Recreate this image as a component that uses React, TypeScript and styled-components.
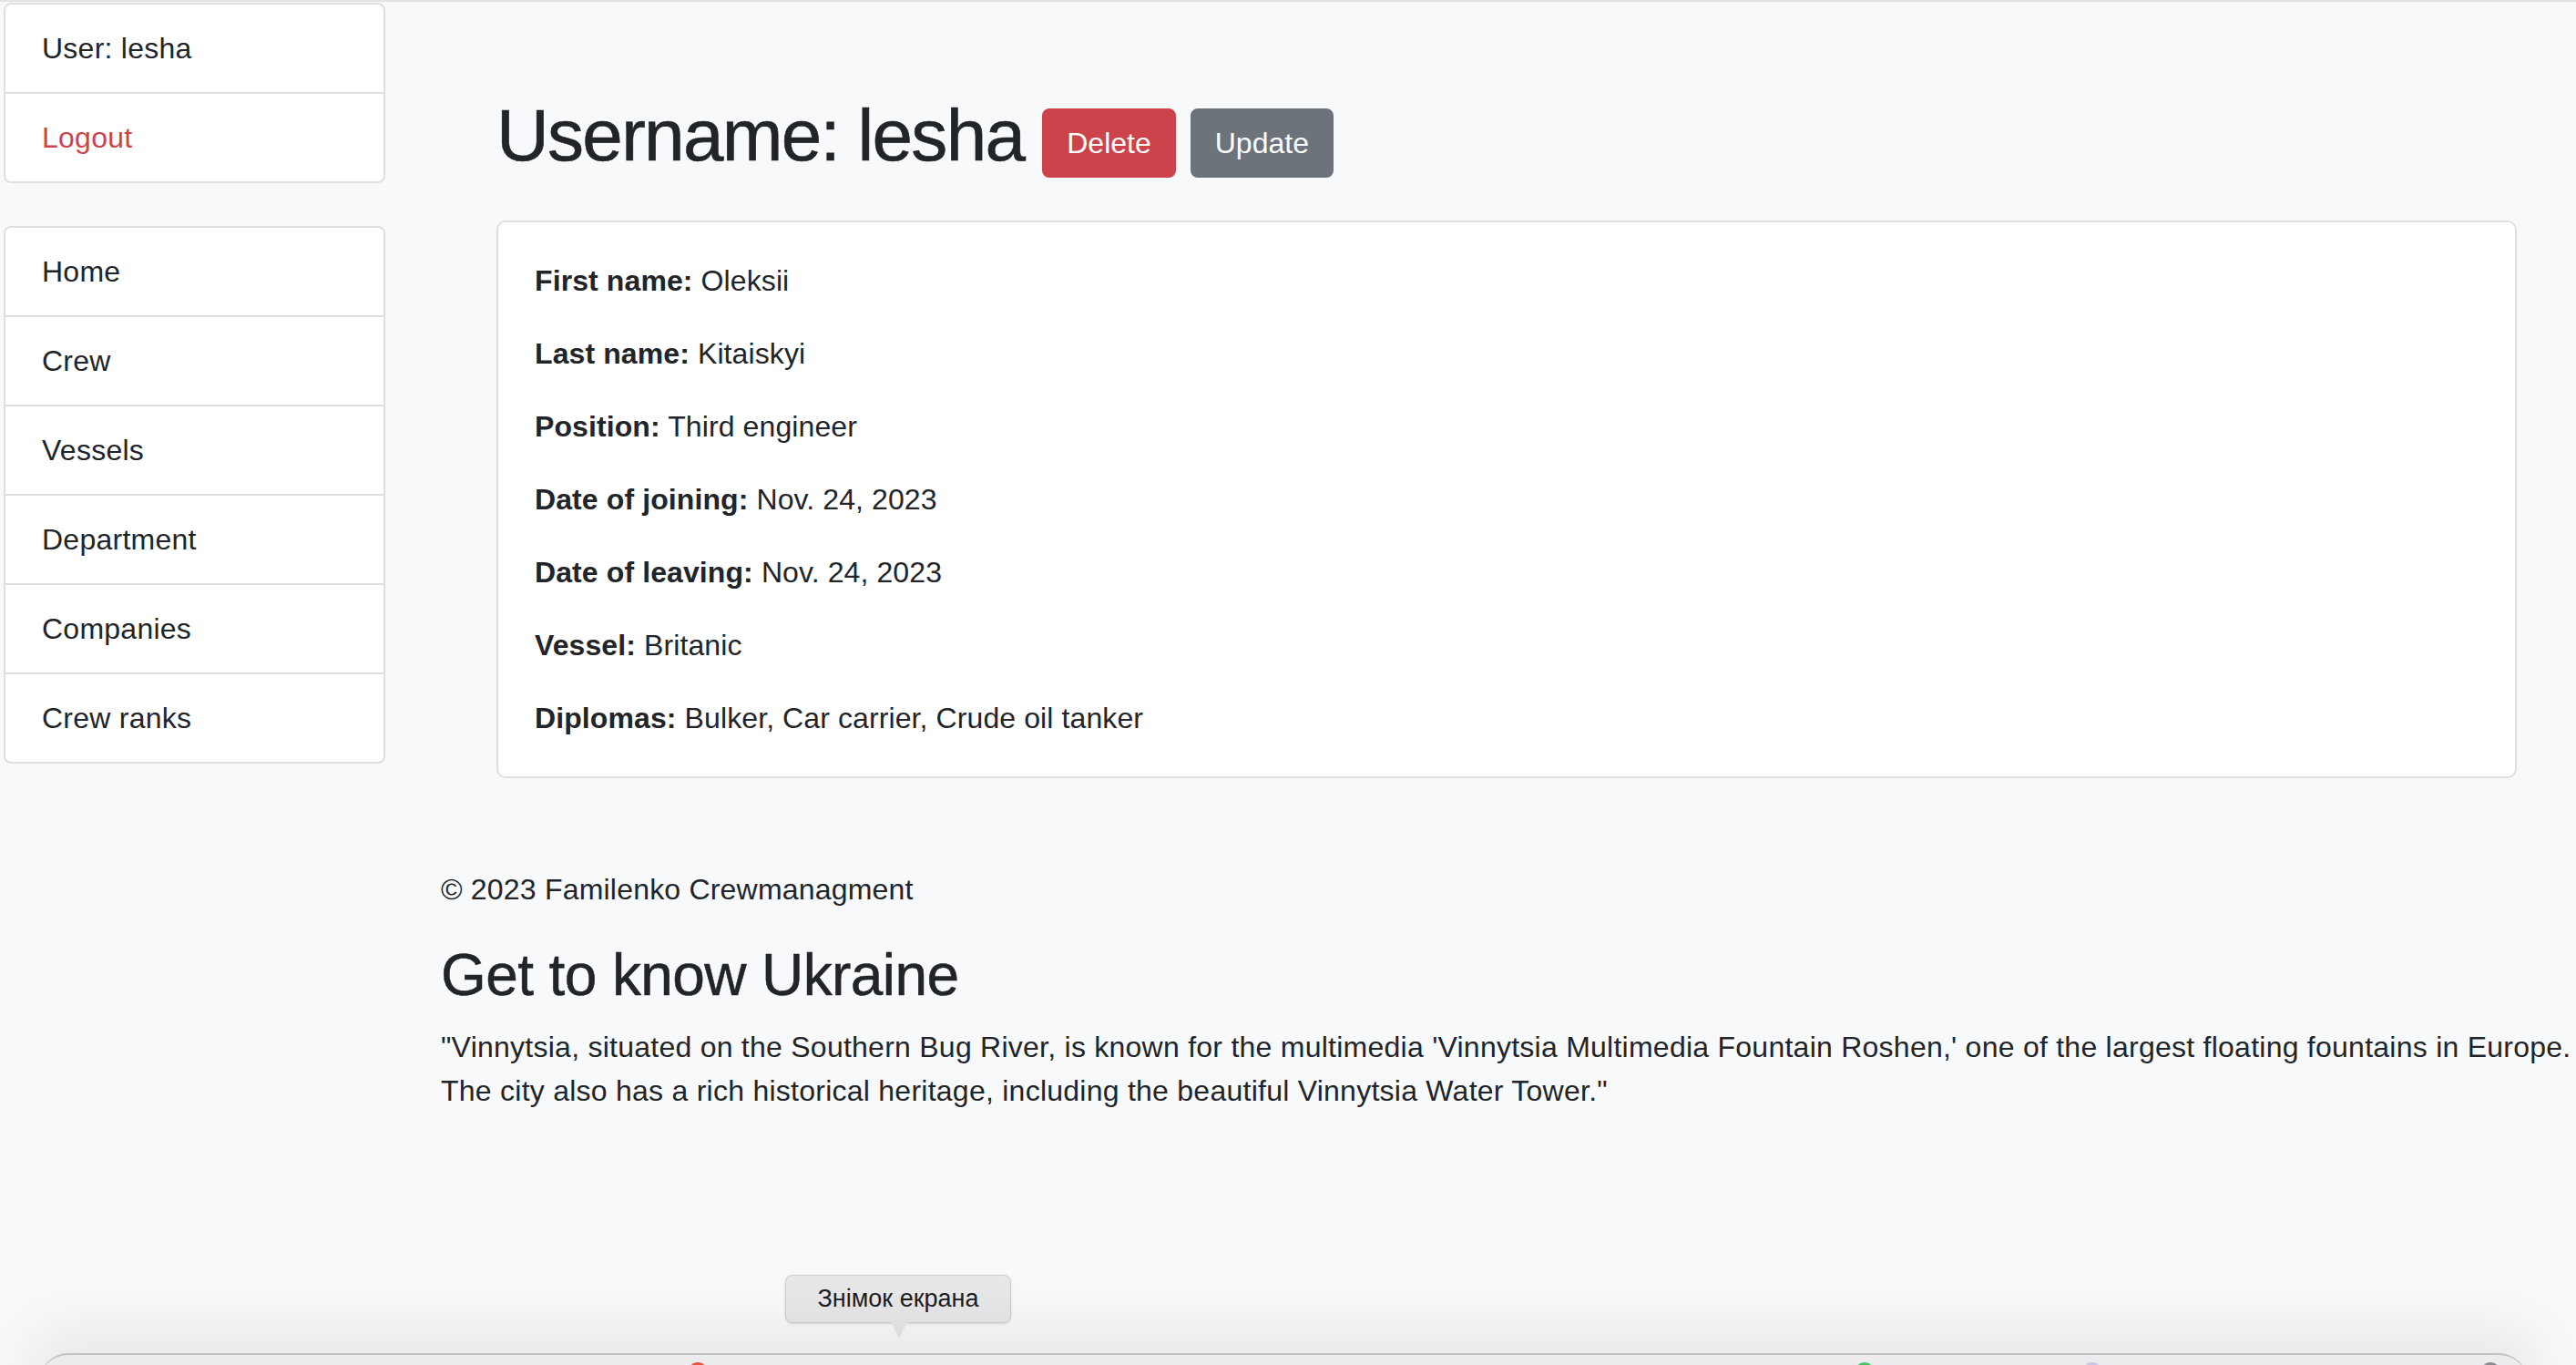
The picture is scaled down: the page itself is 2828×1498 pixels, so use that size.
import React from "react";
import styled, { createGlobalStyle } from "styled-components";

const GlobalStyle = createGlobalStyle`
  html, body {
    margin: 0;
    padding: 0;
  }
  body {
    background: #f8f9fa;
    font-family: "Liberation Sans", Arial, Helvetica, sans-serif;
    font-size: 32px;
    line-height: 48px;
    color: #212529;
    overflow: hidden;
  }
  * { box-sizing: border-box; }
`;

const Page = styled.div`
  position: relative;
  width: 2828px;
  height: 1498px;
  overflow: hidden;
  border-top: 2px solid #e2e3e5;
`;

const Layout = styled.div`
  display: flex;
  align-items: flex-start;
`;

const Sidebar = styled.aside`
  width: 419px;
  margin: 1px 0 0 4px;
  display: flex;
  flex-direction: column;
  gap: 47px;
`;

const ListCard = styled.nav`
  background: #ffffff;
  border: 2px solid #dfdfdf;
  border-radius: 8px;
  overflow: hidden;
`;

const ListItem = styled.div<{ $danger?: boolean }>`
  padding: 24px 40px;
  letter-spacing: 0.25px;
  color: ${(p) => (p.$danger ? "#cc434b" : "#212529")};
  & + & {
    border-top: 2px solid #dfdfdf;
  }
`;

const Main = styled.main`
  flex: 1;
  margin: 0 65px 0 122px;
  padding-top: 99px;
`;

const HeaderRow = styled.div`
  display: flex;
  align-items: center;
  margin-bottom: 29px;
`;

const Title = styled.h1`
  margin: 0 0 16px;
  font-size: 80px;
  line-height: 96px;
  font-weight: 500;
  letter-spacing: -1.7px;
  -webkit-text-stroke: 0.6px #212529;
`;

const Buttons = styled.div`
  display: flex;
  gap: 16px;
  margin-left: 20px;
`;

const Button = styled.button<{ $variant: "danger" | "secondary" }>`
  font-family: inherit;
  font-size: 32px;
  line-height: 48px;
  padding: 12px 25px;
  border: 2px solid ${(p) => (p.$variant === "danger" ? "#cc434b" : "#6c737b")};
  background: ${(p) => (p.$variant === "danger" ? "#cc434b" : "#6c737b")};
  color: #ffffff;
  border-radius: 8px;
`;

const Card = styled.section`
  background: #ffffff;
  border: 2px solid #dedfe0;
  border-radius: 10px;
  padding: 40px;
`;

const Field = styled.p`
  margin: 0 0 32px;
  letter-spacing: 0.1px;
  &:last-child {
    margin-bottom: 0;
  }
  b {
    font-weight: 700;
  }
`;

const Footer = styled.footer`
  margin-top: 98px;
  padding-left: 484px;
`;

const Copy = styled.p`
  margin: 0 0 32px;
  letter-spacing: 0.2px;
`;

const FooterTitle = styled.h2`
  margin: 0 0 16px;
  font-size: 64px;
  line-height: 76.8px;
  font-weight: 500;
  letter-spacing: -0.6px;
  -webkit-text-stroke: 0.5px #212529;
`;

const Quote = styled.p`
  margin: 0;
  white-space: nowrap;
  letter-spacing: 0.25px;
`;

const Tooltip = styled.div`
  position: absolute;
  left: 862px;
  top: 1397px;
  width: 248px;
  height: 53px;
  background: #e7e7e8;
  border: 1px solid #cfcfd1;
  border-radius: 8px;
  font-size: 27px;
  line-height: 51px;
  text-align: center;
  color: #1d1d1f;
  box-shadow: 0 1px 3px rgba(0, 0, 0, 0.12);
  &::after {
    content: "";
    position: absolute;
    left: 115px;
    top: 51px;
    border-left: 9px solid transparent;
    border-right: 9px solid transparent;
    border-top: 18px solid #e7e7e8;
  }
`;

const Dock = styled.div`
  position: absolute;
  left: 43px;
  right: 53px;
  top: 1483px;
  height: 40px;
  background: #ececee;
  border-top: 2px solid #c2c2c5;
  border-radius: 32px 32px 0 0;
  box-shadow: 0 -12px 60px 16px rgba(0, 0, 0, 0.07);
`;

const DockDot = styled.span<{ $color: string }>`
  position: absolute;
  top: 8px;
  width: 22px;
  height: 22px;
  border-radius: 50%;
  background: ${(p) => p.$color};
`;

const fields: [string, string][] = [
  ["First name:", "Oleksii"],
  ["Last name:", "Kitaiskyi"],
  ["Position:", "Third engineer"],
  ["Date of joining:", "Nov. 24, 2023"],
  ["Date of leaving:", "Nov. 24, 2023"],
  ["Vessel:", "Britanic"],
  ["Diplomas:", "Bulker, Car carrier, Crude oil tanker"],
];

const navItems = ["Home", "Crew", "Vessels", "Department", "Companies", "Crew ranks"];

export default function App() {
  return (
    <>
      <GlobalStyle />
      <Page>
        <Layout>
          <Sidebar>
            <ListCard>
              <ListItem>User: lesha</ListItem>
              <ListItem $danger>Logout</ListItem>
            </ListCard>
            <ListCard>
              {navItems.map((n) => (
                <ListItem key={n}>{n}</ListItem>
              ))}
            </ListCard>
          </Sidebar>
          <Main>
            <HeaderRow>
              <Title>Username: lesha</Title>
              <Buttons>
                <Button $variant="danger">Delete</Button>
                <Button $variant="secondary">Update</Button>
              </Buttons>
            </HeaderRow>
            <Card>
              {fields.map(([k, v]) => (
                <Field key={k}>
                  <b>{k}</b> {v}
                </Field>
              ))}
            </Card>
          </Main>
        </Layout>
        <Footer>
          <Copy>© 2023 Familenko Crewmanagment</Copy>
          <FooterTitle>Get to know Ukraine</FooterTitle>
          <Quote>
            "Vinnytsia, situated on the Southern Bug River, is known for the multimedia 'Vinnytsia Multimedia
            Fountain Roshen,' one of the largest floating fountains in Europe.
            <br />
            The city also has a rich historical heritage, including the beautiful Vinnytsia Water Tower."
          </Quote>
        </Footer>
        <Tooltip>Знімок екрана</Tooltip>
        <Dock>
          <DockDot $color="#e5533f" style={{ left: 712 }} />
          <DockDot $color="#4cc46a" style={{ left: 1993 }} />
          <DockDot $color="#c9c6e6" style={{ left: 2243 }} />
          <DockDot $color="#8a8a8e" style={{ left: 2680 }} />
        </Dock>
      </Page>
    </>
  );
}
